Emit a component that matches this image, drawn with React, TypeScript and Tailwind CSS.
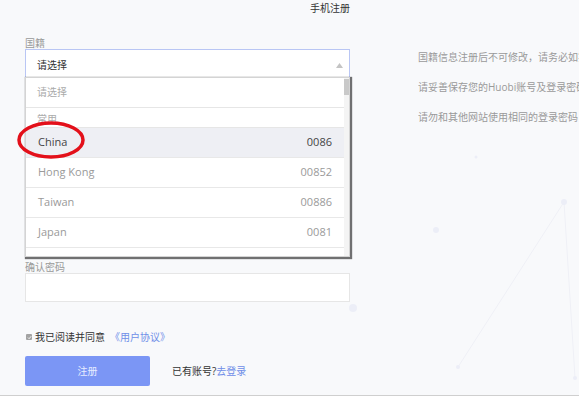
import React from 'react';

const countries = [
  { name: 'China', code: '0086', active: true },
  { name: 'Hong Kong', code: '00852' },
  { name: 'Taiwan', code: '00886' },
  { name: 'Japan', code: '0081' },
];

const App: React.FC = () => {
  return (
    <div className="relative w-[579px] h-[400px] overflow-hidden bg-white font-['Open_Sans','Noto_Sans_CJK_SC',sans-serif]">
      <div className="relative h-[396px] bg-[#f8f9fb] border-b border-[#cfcfcf]">
        {/* faint background constellation */}
        <svg className="absolute inset-0 pointer-events-none" width="579" height="396">
          <g stroke="#eff0f6" strokeWidth="1" fill="none">
            <line x1="458" y1="367" x2="564" y2="202" />
            <line x1="564" y1="202" x2="575" y2="378" />
          </g>
          <g fill="#eceef7">
            <circle cx="476" cy="157" r="1.5" />
            <circle cx="436" cy="230" r="3" />
            <circle cx="564" cy="202" r="3" />
            <circle cx="353" cy="308" r="4" />
            <circle cx="458" cy="367" r="2" />
            <circle cx="575" cy="378" r="2" />
          </g>
        </svg>

        <div className="relative pl-[310px] pt-[2px] text-[10px] leading-[12px] text-[#333]">手机注册</div>

        <div className="relative flex mt-[23px]">
          <div className="ml-[25px] w-[325px]">
            <div className="text-[10px] leading-[12px] text-[#999]">国籍</div>
            <div className="relative">
              <div className="h-[29px] border border-[#b9c6f4] bg-white flex items-center justify-between pl-[11px] pr-[6px] pt-[3px]">
                <span className="text-[10px] text-[#333]">请选择</span>
                <svg width="7" height="5" viewBox="0 0 7 5">
                  <path d="M0 5 L3.5 0 L7 5 Z" fill="#c4c4c4" />
                </svg>
              </div>

              {/* dropdown menu */}
              <div className="absolute left-0 top-[28px] z-10 w-[325px] h-[180px] flex bg-white border border-[#d4d4d4] shadow-[1px_1px_1px_1px_rgba(0,0,0,0.55)] overflow-hidden">
                <div className="flex-1">
                  <div className="h-[30px] flex items-center pl-[11px] border-b border-[#e6e6e6] text-[10px] text-[#aaa]">请选择</div>
                  <div className="h-[20px] flex items-end pl-[11px] border-b border-[#e6e6e6] text-[10px] leading-[15px] text-[#aaa]">常用</div>
                  {countries.map((c) => (
                    <div
                      key={c.name}
                      className={`h-[30px] flex items-center justify-between pl-[12px] pr-[12px] border-b border-[#e8e8e8] text-[11px] ${
                        c.active ? 'bg-[#eeeff4] text-[#444]' : 'text-[#9a9a9a]'
                      }`}
                    >
                      <span>{c.name}</span>
                      <span>{c.code}</span>
                    </div>
                  ))}
                  <div className="h-[10px]"></div>
                </div>
                <div className="w-[5px] bg-[#f4f4f4] pt-[1px]">
                  <div className="h-[16px] bg-[#c9c9c9]"></div>
                </div>
              </div>

              {/* red highlight ring */}
              <svg className="absolute left-[-25px] top-[68px] z-20 pointer-events-none" width="100" height="50" viewBox="0 0 100 50">
                <ellipse cx="51" cy="23" rx="32" ry="17" fill="none" stroke="#e3101a" strokeWidth="3.5" />
              </svg>
            </div>

            {/* area covered by the open menu */}
            <div className="h-[168px]"></div>

            <div className="mt-[15px] text-[10px] leading-[12px] text-[#999]">确认密码</div>
            <div className="h-[29px] border border-[#e6e6e6] bg-white"></div>

            <div className="mt-[29px] flex items-center h-[12px]">
              <span className="ml-[1px] w-[6px] h-[6px] rounded-[1px] bg-[#a3a3a3] flex items-center justify-center">
                <svg width="5" height="5" viewBox="0 0 5 5">
                  <path d="M1 2.6 L2.1 3.7 L4.2 1.2" stroke="#fff" strokeWidth="0.9" fill="none" />
                </svg>
              </span>
              <span className="ml-[3px] text-[10px] text-[#333]">我已阅读并同意</span>
              <span className="ml-[5px] text-[10px] text-[#6f8ee8]">《用户协议》</span>
            </div>

            <div className="mt-[13px] flex items-center">
              <button className="w-[125px] h-[30px] rounded-[2px] bg-[#7b96f5] text-[10px] text-[#e6ecff]">注册</button>
              <span className="ml-[22px] text-[10px] text-[#333]">
                已有账号?<span className="text-[#6f8ee8]">去登录</span>
              </span>
            </div>
          </div>

          <div className="ml-[68px] pt-[5px] flex-1 overflow-hidden text-[10px] leading-[30px] text-[#9a9a9a] whitespace-nowrap">
            <div>国籍信息注册后不可修改，请务必如实填写</div>
            <div>请妥善保存您的Huobi账号及登录密码</div>
            <div>请勿和其他网站使用相同的登录密码</div>
          </div>
        </div>
      </div>
    </div>
  );
};

export default App;
